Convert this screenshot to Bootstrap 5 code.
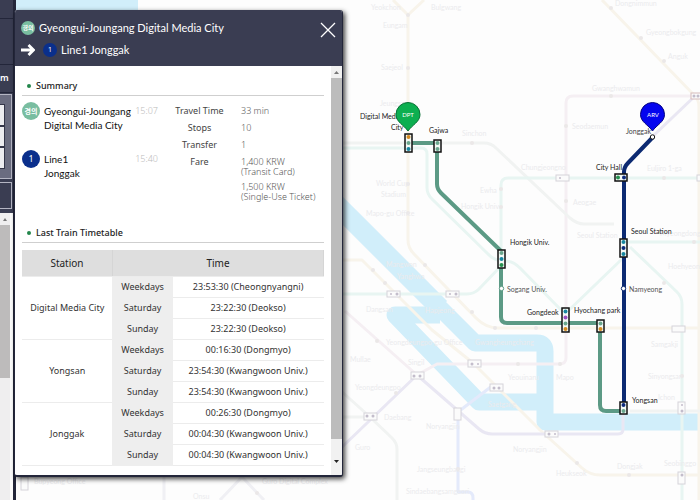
<!DOCTYPE html>
<html lang="en">
<head>
<meta charset="utf-8">
<meta name="viewport" content="width=device-width, initial-scale=1">
<title>Subway route: Digital Media City to Jonggak</title>
<link href="https://cdn.jsdelivr.net/npm/bootstrap@5.3.0/dist/css/bootstrap.min.css" rel="stylesheet">
<style>
  :root { --navy: #3a3d52; --navy-deep: #23263a; --rule: #cfcfcf; }
  body { font-family: "Noto Sans", "Noto Sans CJK KR", sans-serif; font-size: 9px; line-height: 10px; color: #333; background: #fdfdfd; }
  .side { width: 16px; background: var(--navy); border-right: 3px solid var(--navy-deep); }
  .side-brand { height: 19px; border-bottom: 1px solid var(--navy-deep); }
  .side-tabs { height: 46px; border-bottom: 1px solid var(--navy-deep); }
  .side-label { height: 28px; border-bottom: 1px solid var(--navy-deep); color: #fff; line-height: 26px; font-weight: 600; }
  .side-form { height: 85px; margin: 1px 1px 0 0; padding: 9px 6px 9px 0; background: #6a6c80; border: solid #b4b5c3; border-width: 1px 1px 1px 0; }
  .side-input { background: #ececf0; border: 1px solid #34364a; border-left: 0; border-radius: 0; min-width: 0; }
  .side-btn { height: 27px; margin: 3px 1px 4px 0; background: var(--navy); border: solid #b4b5c3; border-width: 1px 1px 1px 0; }
  .side-list { background: #efeeef; border-right: 3px solid #fbfbfb; }
  .side-thumb { height: 153px; background: #bdbbbb; }
  .map { background: #fdfdfd; }
  .map svg { width: 100%; height: 100%; display: block; }
  .map text { font-family: Lato, "Liberation Sans", sans-serif; font-size: 7px; }
  .map .pin { font-size: 6px; }
  .faded { fill: #ebebed; }
  .panel { left: 14px; top: 10px; width: 329px; background: #fff; border: solid var(--navy-deep); border-width: 0 1px 2px; border-radius: 3px; box-shadow: 2px 2px 5px rgba(0,0,0,.75); overflow: hidden; }
  .panel-head { background: var(--navy); color: #fff; height: 56px; padding: 10px 6px 8px; }
  .panel-routes { gap: 6px; }
  .route-name { font: 11px/16px Lato, "Liberation Sans", sans-serif; }
  .line-dot { border-radius: 50%; width: 18px; height: 18px; color: #fff; font-size: 9px; line-height: 18px; text-align: center; flex: none; }
  .line-dot-sm { width: 14px; height: 14px; font-size: 7px; line-height: 14px; }
  .line-gj { background: #79bda0; font-size: 7px; font-family: "Noto Sans CJK KR", sans-serif; font-weight: 700; }
  .line-gj.line-dot-sm { font-size: 6px; }
  .line-1 { background: #0a2f8c; }
  .panel-body { padding: 11px 7px 9px; }
  .section-title { font-size: 9px; line-height: 18px; font-weight: 500; color: #222; border-bottom: 1px solid var(--rule); padding-left: 5px; margin: 0; gap: 5px; }
  .bullet { width: 4px; height: 4px; border-radius: 50%; background: #23864b; }
  .summary { height: 128px; padding-top: 6px; }
  .stops { width: 136px; }
  .stop-name { font: 10px/14px Lato, "Liberation Sans", sans-serif; color: #111; width: 94px; padding-top: 2px; }
  .stop-first { height: 48px; }
  .stop-time { color: #bbb; line-height: 18px; font-weight: 300; }
  .facts { padding-top: 4px; font-weight: 300; gap: 7px; }
  .facts dt { width: 83px; text-align: center; font-weight: 400; color: #444; }
  .facts dd { color: #555; margin: 0; white-space: nowrap; }
  .fare-first { margin-bottom: 5px; }
  .timetable { table-layout: fixed; margin: 7px 0 0; font-size: 9px; line-height: 12px; text-align: center; color: #333; }
  .timetable th, .timetable td { padding: 4px 2px; border-bottom: 1px solid #ececec; font-weight: 400; vertical-align: middle; white-space: nowrap; }
  .timetable thead th { background: #dedede; padding: 7px 2px 6px; font-size: 10px; line-height: 13px; border-right: 1px solid #d5d5d5; color: #222; }
  .timetable .day { background: #eee; border-color: #eee; }
  .scroll-track { width: 11px; background: #f1f1f1; }
  .scroll-thumb { background: #bcbcbc; height: 361px; }
  .arrow { width: 100%; height: 12px; display: block; flex: none; }
</style>
</head>
<body>
<div class="d-flex vh-100 overflow-hidden position-relative">
  <aside class="side d-flex flex-column flex-shrink-0 overflow-hidden">
    <div class="side-brand flex-shrink-0"></div>
    <div class="side-tabs flex-shrink-0"></div>
    <div class="side-label flex-shrink-0">m</div>
    <div class="side-form d-flex flex-column flex-shrink-0">
      <input class="side-input w-100 flex-fill p-0" aria-label="Departure">
      <input class="side-input w-100 flex-fill p-0" aria-label="Via">
      <input class="side-input w-100 flex-fill p-0" aria-label="Arrival">
    </div>
    <button class="side-btn p-0 flex-shrink-0" aria-label="Search"></button>
    <div class="side-list flex-grow-1">
      <svg class="arrow" viewBox="0 0 10 12" aria-hidden="true"><path d="M3 8 5 5 7 8Z" fill="#777"/></svg>
      <div class="side-thumb"></div>
    </div>
  </aside>

  <main class="map flex-grow-1">
    <svg viewBox="16 0 684 500" preserveAspectRatio="xMinYMin slice" role="img" aria-label="Subway map">
      <!-- river -->
      <g fill="none" stroke="#d1eefa" stroke-width="17" stroke-linejoin="round">
        <path d="M16 1H138" stroke-width="20"/>
        <path d="M335 203 475 343H537Q545 343 545 351V422H720" />
        <path d="M320 188 440 308" stroke-width="20"/>
        <path d="M440 315H395L479 402H545"/>
      </g>
      <!-- lines outside the route -->
      <g fill="none" stroke-width="3" stroke-linejoin="round">
        <g stroke="#f8f4eb">
          <path d="M393 0 408 15 424 0M408 15V240Q408 248 414 254L476 318Q486 328 498 328H720"/>
          <path d="M602 0 695 96Q699 100 699 107V500"/>
          <path d="M340 260H362L432 330 473 363 540 430 582 468Q590 475 600 475H720"/>
        </g>
        <g stroke="#f5eff3">
          <path d="M695 96H573Q566 96 566 103V311M566 333V358Q566 364 559 364H437L417 375 345 311"/>
        </g>
        <g stroke="#e9e7f3">
          <path d="M340 449 417 375 479 429Q485 434 492 434H618Q623 434 623 429V414"/>
          <path d="M652 137 695 96"/>
        </g>
        <g stroke="#f1f3f2">
          <path d="M340 143H484Q491 143 496 148L570 218Q577 224 584 224H614"/>
          <path d="M340 390 370 417 392 438Q397 443 397 449V500M340 417H370M630 411H720"/>
        </g>
        <g stroke="#e8f5f2">
          <path d="M340 148H421Q427 148 427 154V188Q427 194 432 199L488 254Q494 261 505 261 513 261 520 268L565 314 623 258"/>
          <path d="M340 294H467Q474 294 479 289L501 266V185Q501 178 508 178H720"/>
          <path d="M624 242H720M630 247 677 292Q682 297 682 304V500"/>
        </g>
        <path d="M458 412V492H468Q473 492 473 498V500M458 412 492 386" stroke="#e4eafb"/>
        <path d="M164 475V500M220 500 242 477 264 500" stroke="#f0f0f4"/>
      </g>
      <g fill="#fbfbfb" stroke="#d6d4da" stroke-width="1">
        <rect x="387" y="291" width="13" height="6"/><rect x="446" y="291" width="13" height="6"/>
        <rect x="556" y="175" width="13" height="6"/><rect x="411" y="372" width="13" height="7"/>
        <rect x="468" y="360" width="13" height="7"/><rect x="490" y="384" width="13" height="7"/>
        <rect x="364" y="413" width="13" height="7"/><rect x="454" y="408" width="7" height="12"/>
        <rect x="545" y="431" width="13" height="6"/><rect x="678" y="402" width="7" height="12"/>
        <rect x="678" y="472" width="7" height="12"/><rect x="672" y="326" width="13" height="6"/>
        <rect x="691" y="93" width="12" height="6" stroke="#d6bcbc"/><rect x="697" y="175" width="12" height="6"/>
        <rect x="21" y="477" width="7" height="13"/>
      </g>
      <g fill="#c3bdcb">
        <circle cx="414" cy="376" r="1.500"/><circle cx="420" cy="376" r="1.500"/><circle cx="472" cy="364" r="1.500"/><circle cx="478" cy="364" r="1"/>
        <circle cx="367" cy="416" r="1.500"/><circle cx="373" cy="416" r="1.500"/><circle cx="494" cy="388" r="1.500"/><circle cx="499" cy="388" r="1.500"/>
        <circle cx="391" cy="294" r="1"/><circle cx="397" cy="294" r="1.500"/><circle cx="450" cy="294" r="1"/><circle cx="456" cy="294" r="1.500"/>
        <circle cx="549" cy="434" r="1.500"/><circle cx="555" cy="434" r="1"/><circle cx="682" cy="405" r="1"/><circle cx="682" cy="411" r="1.500"/>
        <circle cx="694" cy="96" r="1.500"/><circle cx="698" cy="96" r="1.500"/><circle cx="682" cy="475" r="1.500"/><circle cx="560" cy="178" r="1"/>
      </g>
      <g fill="#ebe8e8">
        <circle cx="408" cy="15" r="2"/><circle cx="408" cy="68" r="2"/><circle cx="472" cy="143" r="2"/><circle cx="611" cy="8" r="2"/>
        <circle cx="641" cy="38" r="2"/><circle cx="664" cy="61" r="2"/><circle cx="611" cy="96" r="2"/><circle cx="566" cy="126" r="2"/>
        <circle cx="408" cy="184" r="2"/><circle cx="408" cy="213" r="2"/><circle cx="501" cy="189" r="2"/><circle cx="501" cy="207" r="2"/>
        <circle cx="566" cy="201" r="2"/><circle cx="425" cy="265" r="2"/><circle cx="373" cy="270" r="2"/><circle cx="385" cy="283" r="2"/>
        <circle cx="472" cy="312" r="2"/><circle cx="495" cy="328" r="2"/><circle cx="536" cy="328" r="2"/><circle cx="377" cy="341" r="2"/>
        <circle cx="396" cy="393" r="2"/><circle cx="518" cy="364" r="2"/><circle cx="560" cy="364" r="2"/><circle cx="458" cy="469" r="2"/>
        <circle cx="577" cy="463" r="2"/><circle cx="629" cy="475" r="2"/><circle cx="664" cy="283" r="2"/><circle cx="664" cy="178" r="2"/>
        <circle cx="694" cy="242" r="2"/><circle cx="682" cy="376" r="2"/><circle cx="257" cy="493" r="2"/>
      </g>
      <g class="faded">
        <text x="371" y="10">Yeokchon</text><text x="431" y="10">Bulgwang</text><text x="383" y="28">Eungam</text><text x="381" y="70">Saejeol</text><text x="380" y="106">Jeungsan</text>
        <text x="615" y="6">Dongnimmun</text><text x="646" y="35">Gyeongbokgung</text><text x="668" y="59">Anguk</text><text x="592" y="91">Gwanghwamun</text><text x="572" y="129">Seodaemun</text>
        <text x="462" y="136">Sinchon</text><text x="521" y="170">Chungjeongno</text><text x="647" y="171">Euljiro 1-ga</text><text x="376" y="186">World Cup</text><text x="381" y="197">Stadium</text>
        <text x="366" y="216">Mapo-gu Office</text><text x="480" y="193">Ewha</text><text x="461" y="209">Hongik Univ.</text><text x="573" y="205">Aeogae</text><text x="577" y="238">Seoul Station</text>
        <text x="386" y="267">Mangwon</text><text x="397" y="279">Yanghwa</text><text x="366" y="312">Dangsan</text><text x="425" y="313">Hapjeong</text><text x="668" y="269">Hoehyeon</text><text x="660" y="236">Myeongdong</text>
        <text x="386" y="345">Yeongdeungpo-gu Office</text><text x="475" y="345">Gwangheungchang</text><text x="350" y="362">Mullae</text><text x="408" y="365">Singil</text><text x="508" y="380">Yeouinaru</text><text x="556" y="380">Mapo</text>
        <text x="355" y="390">Yeongdeungpo</text><text x="384" y="420">Daebang</text><text x="488" y="407">Saetgang</text><text x="426" y="429">Noryangjin</text><text x="355" y="450">Guro</text><text x="513" y="452">Noryangjin</text>
        <text x="417" y="472">Jangseungbaegi</text><text x="406" y="494">Sindaebangsamgeori</text><text x="556" y="476">Heukseok</text><text x="617" y="469">Dongjak</text><text x="651" y="347">Samgakji</text><text x="648" y="379">Sinyongsan</text><text x="658" y="400">Ichon</text><text x="664" y="466">Seobinggo</text>
        <text x="34" y="484">Bupyeong Office</text><text x="262" y="484">Guro Digital Complex</text><text x="193" y="499">Onsu</text>
      </g>
      <!-- highlighted route -->
      <g fill="none" stroke-width="4" stroke-linejoin="round">
        <path d="M410 143H437V184Q437 189 441 193L501 251V317Q501 323 507 323H600V405Q600 411 606 411H622" stroke="#5c9a85"/>
        <path d="M653 137 628 163Q624 167 624 172V404" stroke="#0c2a72"/>
      </g>
      <g fill="#f4faf6" stroke="#111" stroke-width="1.500">
        <rect x="405" y="134" width="7" height="18"/><rect x="434" y="140" width="7" height="12"/>
        <rect x="498" y="250" width="7" height="18"/><rect x="562" y="308" width="7" height="24"/>
        <rect x="597" y="320" width="7" height="12"/><rect x="620" y="239" width="7" height="18"/>
        <rect x="615" y="174" width="12" height="7"/><rect x="620" y="402" width="7" height="12"/>
      </g>
      <g>
        <g fill="#d58b20"><circle cx="408.500" cy="137" r="2"/><circle cx="565.500" cy="329" r="2"/><circle cx="600.500" cy="329" r="2"/></g>
        <g fill="#6aa78e"><circle cx="408.500" cy="143" r="2"/><circle cx="437.500" cy="143" r="2"/><circle cx="437.500" cy="149" r="2"/><circle cx="501.500" cy="253" r="2"/><circle cx="565.500" cy="323.500" r="2"/><circle cx="600.500" cy="323.500" r="2"/><circle cx="623.500" cy="411" r="2"/></g>
        <g fill="#1787a0"><circle cx="408.500" cy="149" r="2"/><circle cx="501.500" cy="259" r="2"/><circle cx="565.500" cy="311.500" r="2"/><circle cx="623.500" cy="242" r="2"/><circle cx="623.500" cy="254" r="2"/></g>
        <g fill="#26904f"><circle cx="501.500" cy="265" r="2"/><circle cx="618" cy="177.500" r="2"/></g>
        <g fill="#0c2a7c"><circle cx="624" cy="177.500" r="2"/><circle cx="623.500" cy="248" r="2"/><circle cx="623.500" cy="405" r="2"/></g>
        <circle cx="565.500" cy="317.500" r="2" fill="#9a4fc0"/>
      </g>
      <g fill="#fff">
        <circle cx="501.500" cy="288.500" r="2.200" stroke="#5c9a85"/>
        <circle cx="623.500" cy="288.500" r="2.200" stroke="#0c2a72"/>
        <circle cx="652.500" cy="137" r="2.200" stroke="#111"/>
      </g>
      <g fill="#222">
        <text x="360" y="119">Digital Media</text><text x="391" y="130">City</text><text x="429" y="133">Gajwa</text><text x="510" y="245">Hongik Univ.</text>
        <text x="507" y="292" fill="#555">Sogang Univ.</text><text x="527" y="315">Gongdeok</text><text x="574" y="313">Hyochang park</text>
        <text x="596" y="170">City Hall</text><text x="631" y="234">Seoul Station</text><text x="629" y="292" fill="#555">Namyeong</text><text x="632" y="403">Yongsan</text><text x="626" y="134" fill="#444">Jonggak</text>
      </g>
      <g stroke-width="1">
        <path d="M408 131C404 125 396 122 396 114.500A12 12 0 0 1 420 114.500C420 122 412 125 408 131Z" fill="#0caf50" stroke="#087035"/>
        <path d="M652.500 131C648.500 125 640.500 122 640.500 114.500A12 12 0 0 1 664.500 114.500C664.500 122 656.500 125 652.500 131Z" fill="#0505ef" stroke="#030380"/>
      </g>
      <g fill="#fff" text-anchor="middle"><text class="pin" x="408" y="117">DPT</text><text class="pin" x="653" y="117">ARV</text></g>
    </svg>
  </main>

  <section class="panel position-absolute" role="dialog" aria-label="Route details">
    <header class="panel-head d-flex justify-content-between align-items-start">
      <div class="panel-routes d-flex flex-column">
        <div class="d-flex align-items-center gap-1">
          <span class="line-dot line-dot-sm line-gj">경의</span>
          <span class="route-name">Gyeongui-Joungang Digital Media City</span>
        </div>
        <div class="d-flex align-items-center gap-1">
          <svg width="14" height="12" viewBox="0 0 14 12" aria-hidden="true"><path d="M0 6H12M7.500 1 12.500 6 7.500 11" fill="none" stroke="#fff" stroke-width="2.800"/></svg>
          <span class="line-dot line-dot-sm line-1 ms-1">1</span>
          <span class="route-name">Line1 Jonggak</span>
        </div>
      </div>
      <button class="btn p-0 border-0 lh-1" aria-label="Close">
        <svg width="16" height="16" viewBox="0 0 16 16"><path d="M1 1 15 15M15 1 1 15" stroke="#fff" stroke-width="1.300"/></svg>
      </button>
    </header>
    <div class="d-flex">
      <div class="panel-body flex-grow-1">
        <h2 class="section-title d-flex align-items-center"><span class="bullet"></span>Summary</h2>
        <div class="summary d-flex">
          <div class="stops flex-shrink-0">
            <div class="stop-first d-flex">
              <span class="line-dot line-gj me-1">경의</span>
              <span class="stop-name">Gyeongui-Joungang Digital Media City</span>
              <span class="stop-time">15:07</span>
            </div>
            <div class="d-flex">
              <span class="line-dot line-1 me-1">1</span>
              <span class="stop-name">Line1<br>Jonggak</span>
              <span class="stop-time">15:40</span>
            </div>
          </div>
          <dl class="facts d-flex flex-column m-0">
            <div class="d-flex"><dt>Travel Time</dt><dd>33 min</dd></div>
            <div class="d-flex"><dt>Stops</dt><dd>10</dd></div>
            <div class="d-flex"><dt>Transfer</dt><dd>1</dd></div>
            <div class="d-flex"><dt>Fare</dt><dd><div class="fare-first">1,400 KRW<br>(Transit Card)</div><div>1,500 KRW<br>(Single-Use Ticket)</div></dd></div>
          </dl>
        </div>
        <h2 class="section-title d-flex align-items-center"><span class="bullet"></span>Last Train Timetable</h2>
        <table class="timetable w-100">
          <colgroup><col style="width:30%"><col style="width:20%"><col style="width:50%"></colgroup>
          <thead><tr><th scope="col">Station</th><th scope="col" colspan="2">Time</th></tr></thead>
          <tbody>
            <tr><th scope="rowgroup" rowspan="3">Digital Media City</th><td class="day">Weekdays</td><td>23:53:30 (Cheongnyangni)</td></tr>
            <tr><td class="day">Saturday</td><td>23:22:30 (Deokso)</td></tr>
            <tr><td class="day">Sunday</td><td>23:22:30 (Deokso)</td></tr>
            <tr><th scope="rowgroup" rowspan="3">Yongsan</th><td class="day">Weekdays</td><td>00:16:30 (Dongmyo)</td></tr>
            <tr><td class="day">Saturday</td><td>23:54:30 (Kwangwoon Univ.)</td></tr>
            <tr><td class="day">Sunday</td><td>23:54:30 (Kwangwoon Univ.)</td></tr>
            <tr><th scope="rowgroup" rowspan="3">Jonggak</th><td class="day">Weekdays</td><td>00:26:30 (Dongmyo)</td></tr>
            <tr><td class="day">Saturday</td><td>00:04:30 (Kwangwoon Univ.)</td></tr>
            <tr><td class="day">Sunday</td><td>00:04:30 (Kwangwoon Univ.)</td></tr>
          </tbody>
        </table>
      </div>
      <div class="scroll-track d-flex flex-column flex-shrink-0">
        <svg class="arrow" viewBox="0 0 11 12" aria-hidden="true"><path d="M3 8 5.500 5 8 8Z" fill="#777"/></svg>
        <div class="scroll-thumb"></div>
        <svg class="arrow mt-auto mb-2" viewBox="0 0 11 12" aria-hidden="true"><path d="M3 5 5.500 8 8 5Z" fill="#222"/></svg>
      </div>
    </div>
  </section>
</div>
<script src="https://cdn.jsdelivr.net/npm/bootstrap@5.3.0/dist/js/bootstrap.bundle.min.js"></script>
</body>
</html>
